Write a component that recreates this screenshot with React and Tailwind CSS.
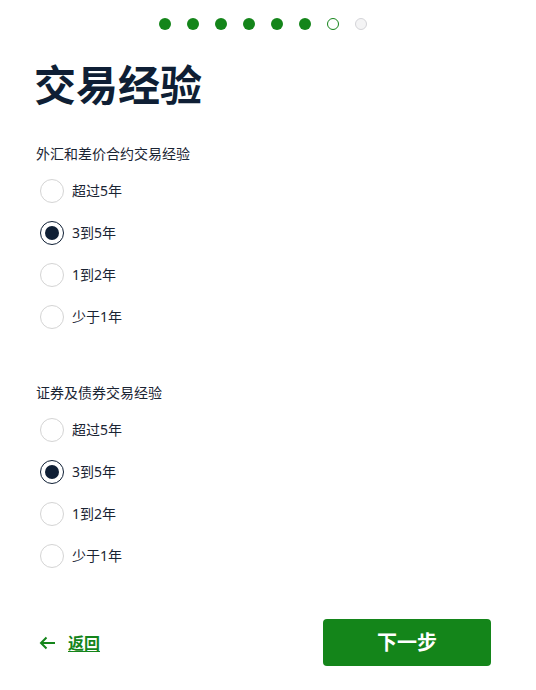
import { useState } from "react";

const OPTIONS = ["超过5年", "3到5年", "1到2年", "少于1年"];

function RadioGroup({ label, value, onChange }) {
  return (
    <div>
      <div className="text-[14px] leading-5 text-[#1a2433]">{label}</div>
      <div className="mt-[15px] flex flex-col gap-[18px] pl-[4px]">
        {OPTIONS.map((o) => (
          <label key={o} className="flex items-center gap-[8px] cursor-pointer" onClick={() => onChange(o)}>
            <span
              className={
                "flex h-[24px] w-[24px] items-center justify-center rounded-full border " +
                (value === o ? "border-[#0f1f35] border-[1.5px]" : "border-[#d4d4d4]")
              }
            >
              {value === o && <span className="h-[14px] w-[14px] rounded-full bg-[#0f1f35]" />}
            </span>
            <span className="text-[14px] leading-5 text-[#1a2433]">{o}</span>
          </label>
        ))}
      </div>
    </div>
  );
}

export default function App() {
  const [fx, setFx] = useState("3到5年");
  const [sec, setSec] = useState("3到5年");
  const steps = [1, 1, 1, 1, 1, 1, 2, 0];

  return (
    <div
      className="h-[690px] w-[536px] bg-white"
      style={{ fontFamily: '"Noto Sans", "Noto Sans CJK SC", sans-serif' }}
    >
      <div className="flex justify-center gap-[16px] pt-[18px] pr-[10px]">
        {steps.map((s, i) => (
          <span
            key={i}
            className={
              "h-[12px] w-[12px] rounded-full " +
              (s === 1
                ? "bg-[#14851a]"
                : s === 2
                ? "border border-[#14851a] bg-white"
                : "border border-[#d4d4d8] bg-[#f4f4f5]")
            }
          />
        ))}
      </div>

      <div className="px-[36px]">
        <h1 className="-ml-[2px] mt-[27px] text-[42px] font-bold leading-[56px] text-[#0f1f35]">交易经验</h1>

        <div className="mt-[31px]">
          <RadioGroup label="外汇和差价合约交易经验" value={fx} onChange={setFx} />
        </div>
        <div className="mt-[54px]">
          <RadioGroup label="证券及债券交易经验" value={sec} onChange={setSec} />
        </div>

        <div className="mt-[51px] flex items-center justify-between pr-[9px]">
          <a href="#" className="flex items-center gap-[12px] pl-[3px] text-[#14851a]">
            <svg width="17" height="14" viewBox="0 0 17 14" fill="none" stroke="currentColor" strokeWidth="2">
              <path d="M16 7H2M7.5 1.5L2 7l5.5 5.5" />
            </svg>
            <span className="text-[16px] font-bold underline underline-offset-2">返回</span>
          </a>
          <button className="h-[47px] w-[168px] rounded-[4px] bg-[#14851a] text-[20px] font-bold text-white">
            下一步
          </button>
        </div>
      </div>
    </div>
  );
}
